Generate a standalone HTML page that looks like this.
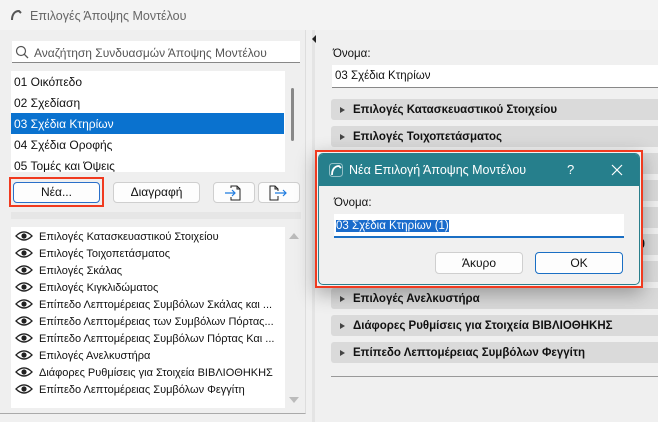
<!DOCTYPE html>
<html><head><meta charset="utf-8"><style>
*{box-sizing:border-box;margin:0;padding:0}
body{width:658px;height:422px;overflow:hidden;background:#f0f0f0;font-family:"Liberation Sans","DejaVu Sans",sans-serif;font-size:12px;color:#111;position:relative}
.abs{position:absolute}
.row{position:absolute;left:0;width:273px;height:21px;line-height:22px;padding-left:3px;font-size:12px}
.btn{position:absolute;background:#fdfdfd;border:1px solid #cfcfcf;border-radius:4px;text-align:center;font-size:12px;line-height:19px}
.li{position:absolute;left:4px;height:17px;line-height:17px;font-size:11px;white-space:nowrap}
.eye{display:inline-block;vertical-align:middle;margin-right:6px;margin-top:-2px}
.sec{position:absolute;left:331px;width:340px;height:21px;background:#dadada;border-radius:3px;font-weight:bold;font-size:11.5px;line-height:23px;padding-left:22px}
.sec:before{content:"";position:absolute;left:9px;top:8px;border-left:5px solid #444;border-top:3.5px solid transparent;border-bottom:3.5px solid transparent}
</style></head><body>
<div class="abs" style="left:0;top:0;width:658px;height:30px;background:#f3f3f3"></div>
<svg class="abs" style="left:10px;top:9px" width="12" height="12" viewBox="0 0 12 12"><path d="M2 11 C2 5 5 2 9 2 L11 4" fill="none" stroke="#555" stroke-width="2"/></svg>
<div class="abs" style="left:30px;top:9px;font-size:12.5px;color:#666">Επιλογές Άποψης Μοντέλου</div>
<div class="abs" style="left:0;top:30px;width:306px;height:384px;background:#efefef;border-right:1px solid #ddd;border-bottom:1px solid #aaa"></div>
<div class="abs" style="left:12px;top:41px;width:288px;height:22px;background:#fff;border-bottom:1px solid #888"></div>
<svg class="abs" style="left:15px;top:45px" width="14" height="14" viewBox="0 0 14 14"><circle cx="6" cy="6" r="4.5" fill="none" stroke="#555" stroke-width="1.2"/><path d="M9.3 9.3 L13 13" stroke="#555" stroke-width="1.3"/></svg>
<div class="abs" style="left:34px;top:46px;font-size:12px;color:#555">Αναζήτηση Συνδυασμών Άποψης Μοντέλου</div>
<div class="abs" style="left:11px;top:71px;width:274px;height:101px;background:#fff;overflow:hidden">
<div class="row" style="top:0">01 Οικόπεδο</div>
<div class="row" style="top:21px">02 Σχεδίαση</div>
<div class="row" style="top:42px;background:#0a72cf;color:#fff">03 Σχέδια Κτηρίων</div>
<div class="row" style="top:63px">04 Σχέδια Οροφής</div>
<div class="row" style="top:84px">05 Τομές και Όψεις</div>
</div>
<div class="abs" style="left:291px;top:88px;width:3px;height:53px;background:#888;border-radius:2px"></div>
<div class="abs" style="left:9px;top:177px;width:95px;height:30px;border:2px solid #f03a1f"></div>
<div class="btn" style="left:13px;top:182px;width:87px;height:21px;border-color:#2a6fc9">Νέα...</div>
<div class="btn" style="left:113px;top:182px;width:87px;height:21px">Διαγραφή</div>
<div class="btn" style="left:213px;top:182px;width:42px;height:21px"></div>
<div class="btn" style="left:258px;top:182px;width:42px;height:21px"></div>
<svg class="abs" style="left:224px;top:184px" width="20" height="18" viewBox="0 0 20 18"><path d="M7 4 V2 H13 L16 5 V16 H7 V13" fill="none" stroke="#222"/><path d="M13 2 V5 H16" fill="none" stroke="#222"/><path d="M1 9 H11 M8 6 L11 9 L8 12" fill="none" stroke="#1e7be0" stroke-width="1.2"/></svg>
<svg class="abs" style="left:268px;top:184px" width="22" height="18" viewBox="0 0 22 18"><path d="M10 7 V5 L7 2 H2 V16 H10 V12" fill="none" stroke="#222"/><path d="M7 2 V5 H10" fill="none" stroke="#222"/><path d="M7 9 H18 M15 6 L18 9 L15 12" fill="none" stroke="#1e7be0" stroke-width="1.2"/></svg>
<div class="abs" style="left:11px;top:212px;width:290px;height:7px;background:#e6e6e6"></div>
<div class="abs" style="left:11px;top:227px;width:274px;height:181px;background:#fff">
<div class="li" style="top:2px"><svg class="eye" width="18" height="10" viewBox="0 0 18 10"><path d="M1 5 Q9 -3 17 5 Q9 13 1 5Z" fill="none" stroke="#222" stroke-width="1.3"/><circle cx="9" cy="5" r="2.6" fill="#222"/></svg>Επιλογές Κατασκευαστικού Στοιχείου</div>
<div class="li" style="top:19px"><svg class="eye" width="18" height="10" viewBox="0 0 18 10"><path d="M1 5 Q9 -3 17 5 Q9 13 1 5Z" fill="none" stroke="#222" stroke-width="1.3"/><circle cx="9" cy="5" r="2.6" fill="#222"/></svg>Επιλογές Τοιχοπετάσματος</div>
<div class="li" style="top:36px"><svg class="eye" width="18" height="10" viewBox="0 0 18 10"><path d="M1 5 Q9 -3 17 5 Q9 13 1 5Z" fill="none" stroke="#222" stroke-width="1.3"/><circle cx="9" cy="5" r="2.6" fill="#222"/></svg>Επιλογές Σκάλας</div>
<div class="li" style="top:53px"><svg class="eye" width="18" height="10" viewBox="0 0 18 10"><path d="M1 5 Q9 -3 17 5 Q9 13 1 5Z" fill="none" stroke="#222" stroke-width="1.3"/><circle cx="9" cy="5" r="2.6" fill="#222"/></svg>Επιλογές Κιγκλιδώματος</div>
<div class="li" style="top:70px"><svg class="eye" width="18" height="10" viewBox="0 0 18 10"><path d="M1 5 Q9 -3 17 5 Q9 13 1 5Z" fill="none" stroke="#222" stroke-width="1.3"/><circle cx="9" cy="5" r="2.6" fill="#222"/></svg>Επίπεδο Λεπτομέρειας Συμβόλων Σκάλας και ...</div>
<div class="li" style="top:87px"><svg class="eye" width="18" height="10" viewBox="0 0 18 10"><path d="M1 5 Q9 -3 17 5 Q9 13 1 5Z" fill="none" stroke="#222" stroke-width="1.3"/><circle cx="9" cy="5" r="2.6" fill="#222"/></svg>Επίπεδο Λεπτομέρειας των Συμβόλων Πόρτας...</div>
<div class="li" style="top:104px"><svg class="eye" width="18" height="10" viewBox="0 0 18 10"><path d="M1 5 Q9 -3 17 5 Q9 13 1 5Z" fill="none" stroke="#222" stroke-width="1.3"/><circle cx="9" cy="5" r="2.6" fill="#222"/></svg>Επίπεδο Λεπτομέρειας Συμβόλων Πόρτας Και ...</div>
<div class="li" style="top:121px"><svg class="eye" width="18" height="10" viewBox="0 0 18 10"><path d="M1 5 Q9 -3 17 5 Q9 13 1 5Z" fill="none" stroke="#222" stroke-width="1.3"/><circle cx="9" cy="5" r="2.6" fill="#222"/></svg>Επιλογές Ανελκυστήρα</div>
<div class="li" style="top:138px"><svg class="eye" width="18" height="10" viewBox="0 0 18 10"><path d="M1 5 Q9 -3 17 5 Q9 13 1 5Z" fill="none" stroke="#222" stroke-width="1.3"/><circle cx="9" cy="5" r="2.6" fill="#222"/></svg>Διάφορες Ρυθμίσεις για Στοιχεία ΒΙΒΛΙΟΘΗΚΗΣ</div>
<div class="li" style="top:155px"><svg class="eye" width="18" height="10" viewBox="0 0 18 10"><path d="M1 5 Q9 -3 17 5 Q9 13 1 5Z" fill="none" stroke="#222" stroke-width="1.3"/><circle cx="9" cy="5" r="2.6" fill="#222"/></svg>Επίπεδο Λεπτομέρειας Συμβόλων Φεγγίτη</div>
</div>
<div class="abs" style="left:289px;top:233px;border-bottom:6px solid #bbb;border-left:5px solid transparent;border-right:5px solid transparent"></div>
<div class="abs" style="left:289px;top:397px;border-top:6px solid #bbb;border-left:5px solid transparent;border-right:5px solid transparent"></div>
<div class="abs" style="left:312px;top:30px;width:3px;height:392px;background:#e4e4e4"></div>
<div class="abs" style="left:312px;top:35px;border-right:4px solid #222;border-top:4px solid transparent;border-bottom:4px solid transparent"></div>
<div class="abs" style="left:333px;top:48px;font-size:11.5px">Όνομα:</div>
<div class="abs" style="left:332px;top:65px;width:330px;height:23px;background:#fff;border-bottom:1px solid #888;padding-left:3px;line-height:23px;font-size:11.5px">03 Σχέδια Κτηρίων</div>
<div class="sec" style="top:99px">Επιλογές Κατασκευαστικού Στοιχείου</div>
<div class="sec" style="top:126px">Επιλογές Τοιχοπετάσματος</div>
<div class="sec" style="top:153px">Επιλογές Σκάλας</div>
<div class="sec" style="top:180px">Επιλογές Κιγκλιδώματος</div>
<div class="sec" style="top:207px">Επίπεδο Λεπτομέρειας Συμβόλων Σκάλας και Κιγκλιδώματ</div>
<div class="sec" style="top:234px">Επίπεδο Λεπτομέρειας των Συμβόλων Πόρτας/Παραθ</div>
<div class="sec" style="top:261px">Επίπεδο Λεπτομέρειας Συμβόλων Πόρτας Και Φου</div>
<div class="sec" style="top:288px">Επιλογές Ανελκυστήρα</div>
<div class="sec" style="top:315px">Διάφορες Ρυθμίσεις για Στοιχεία ΒΙΒΛΙΟΘΗΚΗΣ</div>
<div class="sec" style="top:342px">Επίπεδο Λεπτομέρειας Συμβόλων Φεγγίτη</div>
<div class="abs" style="left:331px;top:376px;width:327px;height:1px;background:#999"></div>
<div class="abs" style="left:315px;top:150px;width:328px;height:138px;border:2px solid #f03a1f;box-shadow:0 6px 18px rgba(0,0,0,.3);background:#f0f0f0"></div>
<div class="abs" style="left:318px;top:153px;width:322px;height:132px;border:1px solid #2a7f8c;border-radius:5px;background:#f0f0f0;overflow:hidden">
<div style="height:32px;background:#267f8c;color:#fff;position:relative">
<svg style="position:absolute;left:10px;top:9px" width="14" height="14" viewBox="0 0 14 14"><rect x="0.5" y="0.5" width="13" height="13" rx="3" fill="none" stroke="#fff" stroke-opacity=".5"/><path d="M3 12 C3 6 6 3 10 3 L12 5" fill="none" stroke="#fff" stroke-width="1.8"/></svg>
<div style="position:absolute;left:30px;top:9px;font-size:12.5px">Νέα Επιλογή Άποψης Μοντέλου</div>
<div style="position:absolute;left:248px;top:8px;font-size:13px">?</div>
<svg style="position:absolute;left:292px;top:10px" width="12" height="12" viewBox="0 0 12 12"><path d="M1 1 L11 11 M11 1 L1 11" stroke="#fff" stroke-width="1.2"/></svg>
</div>
<div style="position:absolute;left:15px;top:43px;font-size:11.5px">Όνομα:</div>
<div style="position:absolute;left:15px;top:60px;width:290px;height:24px;background:#fff;border-bottom:2px solid #1a6fc4;padding:4px 0 0 2px"><span style="background:#1a6ccc;color:#fff;font-size:11.5px">03 Σχέδια Κτηρίων (1)</span></div>
<div class="btn" style="left:116px;top:98px;width:88px;height:22px;line-height:20px">Άκυρο</div>
<div class="btn" style="left:216px;top:98px;width:88px;height:22px;line-height:20px;border-color:#1a6fc4">OK</div>
</div>
</body></html>
